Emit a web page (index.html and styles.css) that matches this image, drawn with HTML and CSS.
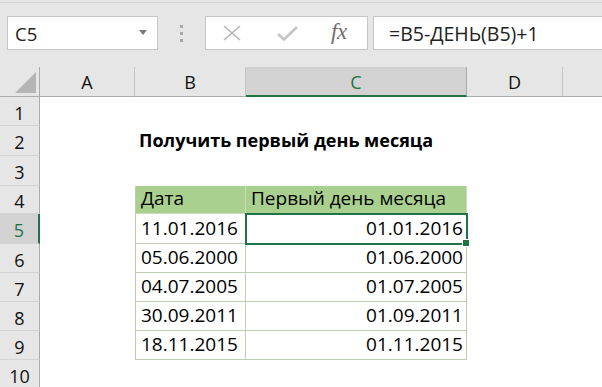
FILE: index.html
```html
<!DOCTYPE html>
<html lang="ru">
<head>
<meta charset="utf-8">
<link rel="stylesheet" href="styles.css">
</head>
<body>
<div class="app">
  <div class="fbar">
    <div class="namebox">
      <span class="nb-text">C5</span>
      <svg class="nb-arrow" width="8" height="5" viewBox="0 0 8 5"><path d="M0 0H8L4 5Z" fill="#7a7a7a"/></svg>
    </div>
    <div class="grip"><i></i><i></i><i></i></div>
    <div class="btns">
      <svg class="ic-x" width="18" height="16" viewBox="0 0 18 16"><path d="M1 1L17 15M17 1L1 15" stroke="#b3b3b3" stroke-width="1.6" fill="none"/></svg>
      <svg class="ic-ok" width="21" height="15" viewBox="0 0 21 15"><path d="M1 8L7 13.5L20 1" stroke="#c4c4c4" stroke-width="2.6" fill="none"/></svg>
      <span class="ic-fx">fx</span>
    </div>
    <div class="formula">=B5-ДЕНЬ(B5)+1</div>
  </div>
  <div class="sheet">
    <div class="corner"><svg width="21" height="21" viewBox="0 0 21 21"><path d="M21 0V21H0Z" fill="#b5b5b5"/></svg></div>
    <div class="ch">A</div>
    <div class="ch">B</div>
    <div class="ch ch-sel">C</div>
    <div class="ch">D</div>
    <div class="ch ch-last"></div>

    <div class="rh">1</div><div class="c"></div><div class="c"></div><div class="c"></div><div class="c"></div><div class="c"></div>

    <div class="rh">2</div><div class="c"></div><div class="c title">Получить первый день месяца</div><div class="c"></div><div class="c"></div><div class="c"></div>

    <div class="rh">3</div><div class="c"></div><div class="c"></div><div class="c"></div><div class="c"></div><div class="c"></div>

    <div class="rh">4</div><div class="c"></div><div class="c t th tb">Дата</div><div class="c t th">Первый день месяца</div><div class="c"></div><div class="c"></div>

    <div class="rh rh-sel">5</div><div class="c"></div><div class="c t tb">11.01.2016</div><div class="c t tr active">01.01.2016</div><div class="c"></div><div class="c"></div>

    <div class="rh">6</div><div class="c"></div><div class="c t tb">05.06.2000</div><div class="c t tr">01.06.2000</div><div class="c"></div><div class="c"></div>

    <div class="rh">7</div><div class="c"></div><div class="c t tb">04.07.2005</div><div class="c t tr">01.07.2005</div><div class="c"></div><div class="c"></div>

    <div class="rh">8</div><div class="c"></div><div class="c t tb">30.09.2011</div><div class="c t tr">01.09.2011</div><div class="c"></div><div class="c"></div>

    <div class="rh">9</div><div class="c"></div><div class="c t tb">18.11.2015</div><div class="c t tr">01.11.2015</div><div class="c"></div><div class="c"></div>

    <div class="rh">10</div><div class="c"></div><div class="c"></div><div class="c"></div><div class="c"></div><div class="c"></div>
  </div>
</div>
</body>
</html>
```
FILE: styles.css
```css
* { box-sizing: border-box; }
html, body { margin: 0; padding: 0; }
body { background: #ffffff; }

.app {
  width: 602px;
  height: 387px;
  overflow: hidden;
  background: #e6e6e6;
  font-family: "Open Sans", "Noto Sans", sans-serif;
  color: #000;
}

/* formula bar */
.fbar {
  height: 65px;
  border-top: 1px solid #d6d6d6;
  margin-top: 2px;
  padding: 13px 0 0 7px;
  display: flex;
  align-items: flex-start;
}
.namebox {
  width: 151px;
  height: 34px;
  background: #fff;
  border: 1px solid #c6c6c6;
  display: flex;
  align-items: center;
  justify-content: space-between;
  padding: 0 10px 0 7px;
}
.nb-text { font-size: 18.5px; color: #222; }
.nb-arrow { margin-bottom: 1px; }
.grip {
  width: 47px;
  height: 34px;
  display: flex;
  flex-direction: column;
  align-items: center;
  justify-content: center;
  gap: 4px;
}
.grip i {
  display: block;
  width: 3px;
  height: 3px;
  background: #a8a8a8;
}
.btns {
  width: 163px;
  height: 34px;
  background: #fff;
  border: 1px solid #c6c6c6;
  display: flex;
  align-items: center;
  padding-left: 17px;
}
.ic-x { margin-right: 36px; }
.ic-ok { margin-right: 33px; }
.ic-fx {
  font-family: "Liberation Serif", "DejaVu Serif", serif;
  font-style: italic;
  font-weight: normal;
  font-size: 23px;
  color: #6e6e6e;
  letter-spacing: -0.5px;
  margin-top: -3px;
}
.formula {
  margin-left: 5px;
  flex: 1;
  height: 34px;
  background: #fff;
  border: 1px solid #c6c6c6;
  border-right: none;
  font-size: 19.5px;
  color: #222;
  padding-left: 15px;
  display: flex;
  align-items: center;
}

/* sheet grid */
.sheet {
  display: grid;
  grid-template-columns: 40px 95px 111px 221px 96px 1fr;
  grid-template-rows: 30px 29px 30px 30px 28px 30px 29px 29px 29px 29px 29px;
  background: #fff;
}
.corner {
  background: #e6e6e6;
  border-right: 1px solid #ababab;
  border-bottom: 1px solid #ababab;
  display: flex;
  align-items: flex-end;
  justify-content: flex-end;
  padding: 0 3px 3px 0;
}
.ch {
  background: #e6e6e6;
  border-right: 1px solid #c4c4c4;
  border-bottom: 1px solid #ababab;
  display: flex;
  align-items: center;
  justify-content: center;
  font-size: 18px;
  color: #111;
  padding-top: 1px;
}
.ch-last { border-right: none; }
.ch-sel {
  background: #d2d2d2;
  color: #217346;
  border-bottom: 2px solid #217346;
  border-right-color: #ababab;
}
.rh {
  background: #e6e6e6;
  border-right: 1px solid #ababab;
  border-bottom: 1px solid #d4d4d4;
  display: flex;
  align-items: center;
  justify-content: center;
  font-size: 18px;
  color: #111;
  padding-top: 3px;
}
.rh-sel {
  background: #d2d2d2;
  color: #217346;
  border-right: 2px solid #217346;
}

.c {
  display: flex;
  align-items: flex-end;
  white-space: nowrap;
  font-size: 19px;
  line-height: 22px;
  padding: 0 3px 4px 5px;
}
.title {
  font-weight: bold;
  font-size: 18px;
  padding-left: 4px;
  padding-bottom: 5px;
  overflow: visible;
  position: relative;
  z-index: 1;
}
.t {
  border-right: 1px solid #bfcdb1;
  border-bottom: 1px solid #bfcdb1;
}
.tb { border-left: 1px solid #bfcdb1; }
.th { background: #a9d08e; border-bottom-color: #c9dcbb; border-right-color: #c9dcbb; }
.tr { justify-content: flex-end; }
.active {
  position: relative;
  outline: 2px solid #217346;
  outline-offset: -1px;
}
.active::after {
  content: "";
  position: absolute;
  right: -4px;
  bottom: -4px;
  width: 6px;
  height: 6px;
  background: #217346;
  border: 1px solid #fff;
}
```
